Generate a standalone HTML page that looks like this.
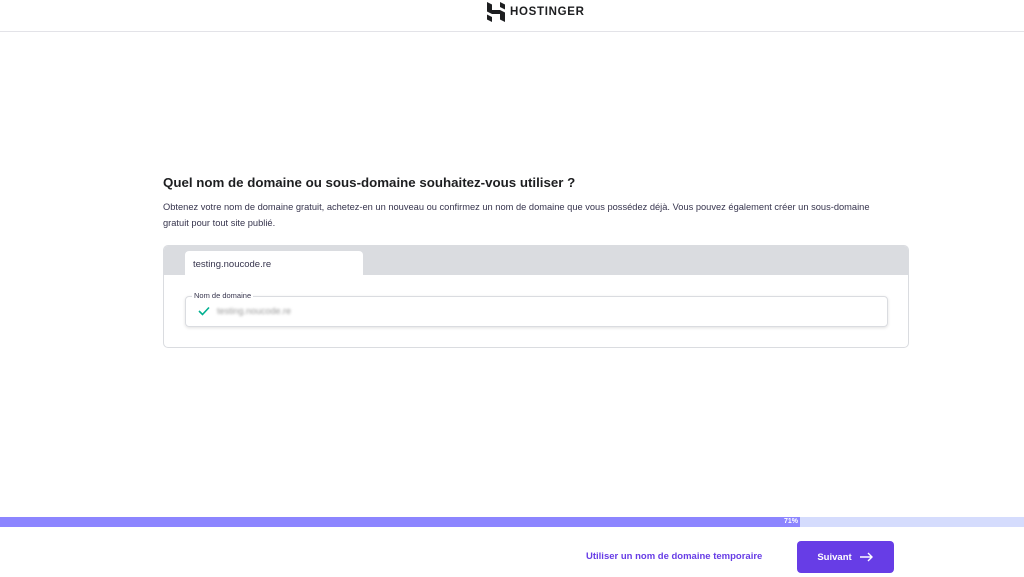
<!DOCTYPE html>
<html><head><meta charset="utf-8"><style>
*{margin:0;padding:0;box-sizing:border-box}
body{width:1024px;height:577px;background:#fff;font-family:"Liberation Sans",sans-serif;position:relative;overflow:hidden;color:#2f1c6a}
.top{position:absolute;left:0;top:0;width:1024px;height:32px;border-bottom:1px solid #e3e3e8}
.logo{position:absolute;left:487px;top:2px;display:flex;align-items:center}
.logo span{font-weight:bold;font-size:11.5px;letter-spacing:0.7px;color:#1d1e20;margin-left:5px}
h1{position:absolute;left:163px;top:175px;font-size:13.3px;font-weight:bold;color:#1d1e20}
.desc{position:absolute;left:163px;top:199px;width:728px;font-size:9.3px;line-height:16px;color:#36344d}
.card{position:absolute;left:163px;top:245px;width:746px;height:103px;border:1px solid #dadce0;border-radius:5px;overflow:hidden}
.tabs{height:29px;background:#dadce0;position:relative}
.tab{position:absolute;left:21px;top:5px;width:178px;height:24px;background:#fff;border-radius:4px 4px 0 0;font-size:9.5px;color:#36344d;padding:8px 0 0 8px}
.field{position:absolute;left:21px;top:50px;width:703px;height:31px;border:1px solid #dadce0;border-radius:4px;box-shadow:0 1px 3px rgba(0,0,0,.12)}
.lbl{position:absolute;left:6px;top:-6px;background:#fff;padding:0 2px;font-size:7.5px;color:#36344d}
.chk{position:absolute;left:12px;top:9px}
.val{position:absolute;left:31px;top:9px;font-size:9px;color:#999;filter:blur(1.4px)}
.prog{position:absolute;left:0;top:517px;width:1024px;height:10px;background:#d5dcfd}
.fill{width:800px;height:10px;background:#8c85ff;position:relative}
.fill b{position:absolute;right:2px;top:1px;font-size:7px;color:#fff}
.link{position:absolute;left:586px;top:551px;font-size:9.5px;font-weight:bold;color:#673de6}
.btn{position:absolute;left:797px;top:541px;width:97px;height:32px;background:#673de6;border-radius:4px;color:#fff;font-size:9.5px;font-weight:bold;display:flex;align-items:center;justify-content:center;gap:8px}
</style></head><body>
<div class="top"><div class="logo">
<svg width="18" height="20" viewBox="0 0 18 20"><path d="M0 0 L5 2.5 V8 L13 8 L18 10.5 V20 L13 17.5 V12 L5 12 L0 9.5Z" fill="#1d1e20"/><path d="M13 0 L18 2.5 V7.5 L13 5Z M0 12.5 L5 15 V20 L0 17.5Z" fill="#1d1e20"/></svg>
<span>HOSTINGER</span></div></div>
<h1>Quel nom de domaine ou sous-domaine souhaitez-vous utiliser ?</h1>
<div class="desc">Obtenez votre nom de domaine gratuit, achetez-en un nouveau ou confirmez un nom de domaine que vous possédez déjà. Vous pouvez également créer un sous-domaine gratuit pour tout site publié.</div>
<div class="card"><div class="tabs"><div class="tab">testing.noucode.re</div></div>
<div class="field"><div class="lbl">Nom de domaine</div>
<svg class="chk" width="12" height="10" viewBox="0 0 12 10"><path d="M1 5 L4.5 8.5 L11 1.5" stroke="#00b090" stroke-width="1.6" fill="none"/></svg>
<div class="val">testing.noucode.re</div></div></div>
<div class="prog"><div class="fill"><b>71%</b></div></div>
<div class="link">Utiliser un nom de domaine temporaire</div>
<div class="btn">Suivant <svg width="14" height="10" viewBox="0 0 14 10"><path d="M0 5 H12 M8 1 L12 5 L8 9" stroke="#fff" stroke-width="1.4" fill="none"/></svg></div>
</body></html>
